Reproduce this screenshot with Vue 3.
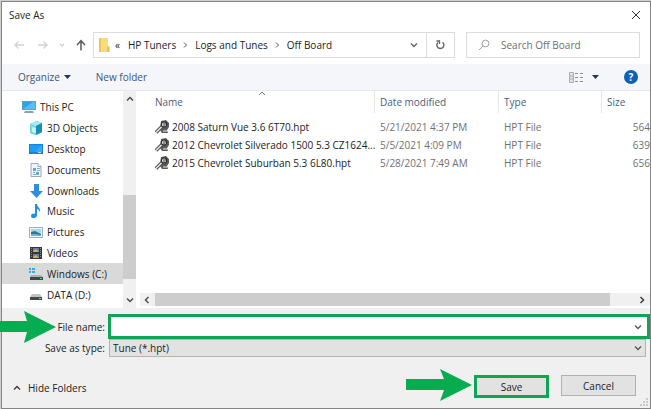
<script setup>
import { ref } from 'vue';

const fileName = ref('');
const fileType = ref('hpt');
const search = ref('');
const selectedPlace = ref('Windows (C:)');

const crumbs = ['HP Tuners', 'Logs and Tunes', 'Off Board'];

const places = [
  { name: 'This PC', icon: 'pc' },
  { name: '3D Objects', icon: 'cube' },
  { name: 'Desktop', icon: 'desktop' },
  { name: 'Documents', icon: 'document' },
  { name: 'Downloads', icon: 'download' },
  { name: 'Music', icon: 'music' },
  { name: 'Pictures', icon: 'picture' },
  { name: 'Videos', icon: 'video' },
  { name: 'Windows (C:)', icon: 'windows' },
  { name: 'DATA (D:)', icon: 'drive' }
];

const files = [
  { name: '2008 Saturn Vue 3.6 6T70.hpt', date: '5/21/2021 4:37 PM', type: 'HPT File', size: '564' },
  { name: '2012 Chevrolet Silverado 1500 5.3 CZ1624...', date: '5/5/2021 4:09 PM', type: 'HPT File', size: '639' },
  { name: '2015 Chevrolet Suburban 5.3 6L80.hpt', date: '5/28/2021 7:49 AM', type: 'HPT File', size: '656' }
];
</script>

<template>
  <div class="screen">
    <div class="dialog" role="dialog" aria-label="Save As">
      <header class="title-bar">
        <span>Save As</span>
        <button type="button" class="close" aria-label="Close">
          <svg width="10" height="10" viewBox="0 0 10 10"><path d="M1 1l8 8M9 1L1 9" stroke="#333" fill="none" /></svg>
        </button>
      </header>

      <div class="nav-bar">
        <div class="nav-buttons">
          <button type="button" aria-label="Back">
            <svg width="12" height="12" viewBox="0 0 12 12"><path d="M11 6H2M5.500 2.500L2 6l3.500 3.500" stroke="#d2d2d2" stroke-width="1.300" fill="none" /></svg>
          </button>
          <button type="button" aria-label="Forward">
            <svg width="12" height="12" viewBox="0 0 12 12"><path d="M1 6h9M6.500 2.500L10 6L6.500 9.500" stroke="#d2d2d2" stroke-width="1.300" fill="none" /></svg>
          </button>
          <button type="button" class="recent" aria-label="Recent locations">
            <svg width="6" height="6" viewBox="0 0 6 6"><path d="M1 2l2 2l2-2" stroke="#d0d0d0" stroke-width="1.300" fill="none" /></svg>
          </button>
          <button type="button" aria-label="Up">
            <svg width="12" height="12" viewBox="0 0 12 12"><path d="M6 11.500V2M2 6l4-4.300L10 6" stroke="#5c5c5c" stroke-width="1.500" fill="none" /></svg>
          </button>
        </div>

        <div class="address">
          <svg class="folder" width="12" height="14" viewBox="0 0 12 14">
            <path d="M1 0h9v8l1.500 1v5H1z" fill="#f8dc79" />
            <path d="M1 0h2v14H1z" fill="#edc45a" />
            <path d="M9 9l1.500-1l1 1v5H9z" fill="#eac356" />
          </svg>
          <span class="more">«</span>
          <template v-for="(crumb, i) in crumbs" :key="crumb">
            <svg v-if="i" class="crumb-arrow" width="5" height="8" viewBox="0 0 5 8"><path d="M1 1.500L3.500 4L1 6.500" stroke="#555" fill="none" /></svg>
            <a href="#" class="crumb">{{ crumb }}</a>
          </template>
          <button type="button" class="address-drop" aria-label="Previous locations">
            <svg width="8" height="8" viewBox="0 0 8 8"><path d="M1 2.500l3 3l3-3" stroke="#666" stroke-width="1.500" fill="none" /></svg>
          </button>
          <button type="button" class="refresh" aria-label="Refresh">
            <svg width="11" height="12" viewBox="0 0 11 12">
              <path d="M7.500 3.200A3.500 3.500 0 1 1 3 3.400" stroke="#666" stroke-width="1.400" fill="none" />
              <path d="M1.500 2h3v3" stroke="#666" stroke-width="1.300" fill="none" />
            </svg>
          </button>
        </div>

        <label class="search">
          <svg width="12" height="12" viewBox="0 0 12 12"><circle cx="7.500" cy="4.500" r="3.400" stroke="#a0a0a0" fill="none" /><path d="M5 7L1 11" stroke="#a0a0a0" fill="none" /></svg>
          <input v-model="search" type="text" placeholder="Search Off Board" aria-label="Search Off Board" />
        </label>
      </div>

      <div class="toolbar">
        <button type="button" class="organize">
          Organize
          <svg width="7" height="4" viewBox="0 0 7 4"><path d="M0 0h7L3.500 4z" fill="#1e395b" /></svg>
        </button>
        <button type="button">New folder</button>
        <button type="button" class="view" aria-label="Change your view">
          <svg width="15" height="11" viewBox="0 0 15 11">
            <path d="M.5.500h4v10h-4zM.5 4h4M.5 7h4" stroke="#a9adb3" fill="#dfe2e6" />
            <path d="M6 1.500h3M11 1.500h3M6 5.500h3M11 5.500h3M6 9.500h3M11 9.500h3" stroke="#8a8f96" />
          </svg>
          <svg width="7" height="4" viewBox="0 0 7 4"><path d="M0 0h7L3.500 4z" fill="#1e395b" /></svg>
        </button>
        <button type="button" class="help" aria-label="Help">?</button>
      </div>

      <main class="content">
        <ul class="places">
          <li
            v-for="place in places"
            :key="place.name"
            :class="{ root: place.icon === 'pc', selected: place.name === selectedPlace }"
            @click="selectedPlace = place.name"
          >
            <svg width="14" height="14" viewBox="0 0 14 14">
              <g v-if="place.icon === 'pc'">
                <path d="M0 1h14v9H0z" fill="#5f9fc9" />
                <path d="M1 2h12v7H1z" fill="#27a5f3" />
                <path d="M1 9L11 2h2v7z" fill="#58bdf8" />
                <path d="M3 11h8l1 2H2z" fill="#8aa3b4" />
              </g>
              <g v-else-if="place.icon === 'cube'">
                <path d="M1 3l7-3l5 2v9l-6 3l-6-2z" fill="#2ab5cf" />
                <path d="M1 3l6 2v9l-6-2z" fill="#74dbe6" />
                <path d="M1 3l7-3l5 2l-6 3z" fill="#a7eef2" />
                <path d="M7 5l6-3v9l-6 3z" fill="#168fb2" />
                <path d="M3 6l4 1v5l-4-1z" fill="#c6f4f5" />
              </g>
              <g v-else-if="place.icon === 'desktop'">
                <path d="M0 2h14v10H0z" fill="#1584d8" />
                <path d="M1 3h12v7H1z" fill="#1e9bf4" />
                <path d="M6 10L13 3v7z" fill="#37a9fa" />
                <path d="M9 10h3v1H9z" fill="#bfe2fa" />
              </g>
              <g v-else-if="place.icon === 'document'">
                <path d="M2 .5h7l3 3v10H2z" fill="#eef4f8" stroke="#9aabb8" />
                <path d="M9 .5v3h3" fill="#fff" stroke="#9aabb8" />
                <path d="M4 5h3v3H4zM7 9h3v2H7z" fill="#61a5d2" />
                <path d="M8 5.500h3M8 7.500h3M4 9.500h2M4 11.500h6" stroke="#7aafd0" />
              </g>
              <g v-else-if="place.icon === 'download'">
                <path d="M5 0h5v7h4l-6.500 7L1 7h4z" fill="#2f8de0" />
              </g>
              <g v-else-if="place.icon === 'music'">
                <path d="M6 0h2c0 3 4 4 3 8c-1-2-2-3-3-3v6c0 4-6 4-6 1c0-2 2-3 4-2z" fill="#1e90e5" />
              </g>
              <g v-else-if="place.icon === 'picture'">
                <path d="M.5 2.500h13v10H.5z" fill="#f2f5f7" stroke="#a3adb4" />
                <path d="M2 4h10v7H2z" fill="#a7d5ef" />
                <path d="M2 7l4-1l6 3v2H2z" fill="#3c718b" />
                <path d="M2 9l5 0l5 1v1H2z" fill="#6ab3da" />
              </g>
              <g v-else-if="place.icon === 'video'">
                <path d="M1 1h12v12H1z" fill="#34363c" />
                <path d="M4 2h6v4H4z" fill="#5f7fa8" />
                <path d="M4 8h6v4H4z" fill="#657fb5" />
                <path d="M4 5l3-2l3 3H4zM4 11l3-2l3 3H4z" fill="#c9b45c" />
                <path d="M2.500 2v10M11.500 2v10" stroke="#85888e" stroke-dasharray="1 1" />
              </g>
              <g v-else-if="place.icon === 'windows'">
                <path d="M0 1h2v2H0zM3 1h3v2H3zM0 4h2v2H0zM3 4h3v2H3z" fill="#23b4ea" />
                <path d="M2 8h10l2 2H1z" fill="#a9b1b5" />
                <path d="M1 10h13v3H1z" fill="#3e4649" />
                <path d="M11 11h2v1h-2z" fill="#4ee08a" />
              </g>
              <g v-else>
                <path d="M3 6h8l2 3H1z" fill="#c0c3c5" />
                <path d="M1 9h12v3H1z" fill="#44494b" />
                <path d="M10 10h2v1h-2z" fill="#69d690" />
              </g>
            </svg>
            <span>{{ place.name }}</span>
          </li>
        </ul>

        <div class="v-scroll">
          <svg width="8" height="8" viewBox="0 0 8 8"><path d="M1 5.500l3-3l3 3" stroke="#505050" stroke-width="1.500" fill="none" /></svg>
          <div class="v-thumb"></div>
          <svg width="8" height="8" viewBox="0 0 8 8"><path d="M1 2.500l3 3l3-3" stroke="#505050" stroke-width="1.500" fill="none" /></svg>
        </div>

        <div class="files">
          <table>
            <colgroup>
              <col class="col-name" />
              <col class="col-date" />
              <col class="col-type" />
              <col class="col-size" />
            </colgroup>
            <thead>
              <tr>
                <th>
                  Name
                  <svg class="sort" width="8" height="5" viewBox="0 0 8 5"><path d="M1 4l3-3l3 3" stroke="#777" fill="none" /></svg>
                </th>
                <th>Date modified</th>
                <th>Type</th>
                <th>Size</th>
              </tr>
            </thead>
            <tbody>
              <tr v-for="file in files" :key="file.name">
                <td>
                  <div class="file-name">
                    <svg width="14" height="14" viewBox="0 0 14 14">
                      <path d="M6 1l5-1l3 3v4l-2 3l1 3H7l-2-3z" fill="#5a5a5a" />
                      <circle cx="9" cy="4.500" r="2.700" fill="#ddd" stroke="#2d2d2d" stroke-width="1.200" />
                      <path d="M8 4h3M8 6h2" stroke="#444" />
                      <path d="M7 6.500L1 12.500" stroke="#4d4d4d" stroke-width="3.500" />
                      <path d="M6.500 7L1 12.500" stroke="#ececec" stroke-width="1.400" />
                      <path d="M8 11h4" stroke="#bbb" stroke-width="1.500" />
                    </svg>
                    <span>{{ file.name }}</span>
                  </div>
                </td>
                <td>{{ file.date }}</td>
                <td>{{ file.type }}</td>
                <td class="size">{{ file.size }}</td>
              </tr>
            </tbody>
          </table>
          <div class="h-scroll">
            <svg width="8" height="8" viewBox="0 0 8 8"><path d="M5.500 1l-3 3l3 3" stroke="#505050" stroke-width="1.500" fill="none" /></svg>
            <div class="h-thumb"></div>
            <svg width="8" height="8" viewBox="0 0 8 8"><path d="M2.500 1l3 3l-3 3" stroke="#404040" stroke-width="1.500" fill="none" /></svg>
          </div>
        </div>
      </main>

      <form class="form" @submit.prevent>
        <div class="field name-field">
          <svg class="arrow arrow-name" width="56" height="32" viewBox="0 0 56 32"><path d="M0 10h27l-3-10l32 16l-32 16l3-11H0z" fill="#05ac50" /></svg>
          <label for="file-name">File name:</label>
          <div class="combo">
            <input id="file-name" v-model="fileName" type="text" />
            <svg width="8" height="8" viewBox="0 0 8 8"><path d="M1 2.500l3 3l3-3" stroke="#555" stroke-width="1.300" fill="none" /></svg>
          </div>
        </div>
        <div class="field">
          <label for="file-type">Save as type:</label>
          <div class="type-box">
            <select id="file-type" v-model="fileType">
              <option value="hpt">Tune (*.hpt)</option>
            </select>
            <svg width="8" height="8" viewBox="0 0 8 8"><path d="M1 2.500l3 3l3-3" stroke="#555" stroke-width="1.300" fill="none" /></svg>
          </div>
        </div>

        <div class="actions">
          <button type="button" class="hide-folders">
            <svg width="8" height="8" viewBox="0 0 8 8"><path d="M1 5.500l3-3l3 3" stroke="#444" stroke-width="1.500" fill="none" /></svg>
            Hide Folders
          </button>
          <div class="save-group">
            <svg class="arrow arrow-save" width="66" height="32" viewBox="0 0 66 32"><path d="M0 10h38l-4-10l32 16l-32 16l4-11H0z" fill="#05ac50" /></svg>
            <button type="submit" class="btn btn-save">Save</button>
          </div>
          <button type="button" class="btn">Cancel</button>
        </div>
        <svg class="grip" width="8" height="8" viewBox="0 0 8 8"><path d="M6 0h2v2H6zM3 3h2v2H3zM6 3h2v2H6zM0 6h2v2H0zM3 6h2v2H3zM6 6h2v2H6z" fill="#c8c8c8" /></svg>
      </form>
    </div>
  </div>
</template>

<style>
body {
  margin: 0;
  background: #cfcfcf;
}
</style>

<style scoped>
.screen {
  box-sizing: border-box;
  min-height: 100vh;
  padding: 1px 0 0 1px;
  display: flex;
  font-family: "Open Sans", "Noto Sans", sans-serif;
  font-size: 10px;
  line-height: 14px;
  color: #222;
}

.dialog {
  flex: 1;
  min-width: 0;
  display: flex;
  flex-direction: column;
  border: 1px solid #858585;
  background: #fff;
}

button,
input,
select {
  font: inherit;
  color: inherit;
  margin: 0;
  padding: 0;
  border: 0;
  border-radius: 0;
  background: none;
  outline: none;
}

svg {
  display: block;
  flex: none;
}

.title-bar {
  display: flex;
  align-items: center;
  justify-content: space-between;
  height: 26px;
  padding: 0 9px 0 7px;
}

.nav-bar {
  display: flex;
  align-items: center;
  height: 26px;
  padding: 4px 10px 6px 11px;
}

.nav-buttons {
  display: flex;
  align-items: center;
  width: 80px;
  gap: 12px;
}

.nav-buttons .recent {
  margin: 0 -2px;
}

.address {
  box-sizing: border-box;
  flex: 1;
  display: flex;
  align-items: center;
  height: 26px;
  padding-left: 4px;
  border: 1px solid #dcdcdc;
}

.more {
  margin: 0 8px 0 5px;
}

.crumb {
  color: #222;
  text-decoration: none;
}

.crumb-arrow {
  margin: 0 7px;
}

.address-drop {
  display: flex;
  margin-left: auto;
  padding: 8px;
}

.refresh {
  display: flex;
  align-items: center;
  justify-content: center;
  width: 28px;
  height: 24px;
  border-left: 1px solid #dcdcdc;
}

.search {
  box-sizing: border-box;
  display: flex;
  align-items: center;
  gap: 11px;
  width: 174px;
  height: 26px;
  margin-left: 11px;
  padding-left: 11px;
  border: 1px solid #dcdcdc;
}

.search input {
  flex: 1;
  min-width: 0;
}

.search input::placeholder {
  color: #6d6d6d;
  opacity: 1;
}

.toolbar {
  display: flex;
  align-items: center;
  height: 26px;
  padding: 0 12px 0 16px;
  background: #f4f6f9;
  border-bottom: 1px solid #e6e8ea;
  color: #40557a;
}

.organize {
  display: flex;
  align-items: center;
  gap: 4px;
  margin-right: 25px;
}

.view {
  display: flex;
  align-items: center;
  gap: 8px;
  margin-left: auto;
}

.help {
  width: 14px;
  height: 14px;
  margin-left: 25px;
  border-radius: 50%;
  background: #0d60b5;
  color: #fff;
  font-weight: 700;
  text-align: center;
}

.content {
  display: flex;
  height: 217px;
}

.places {
  box-sizing: border-box;
  display: grid;
  grid-template-rows: repeat(10, 1fr);
  width: 121px;
  margin: 0;
  padding: 6px 0 3px;
  list-style: none;
}

.places li {
  display: flex;
  align-items: center;
  gap: 4px;
  padding-left: 27px;
}

.places .root {
  padding-left: 20px;
}

.places .selected {
  background: #d9d9d9;
}

.v-scroll {
  display: flex;
  flex-direction: column;
  align-items: center;
  box-sizing: border-box;
  width: 13px;
  padding: 4px 0;
  background: #f0f0f0;
}

.v-thumb {
  width: 13px;
  height: 84px;
  margin: 92px 0 auto;
  background: #cdcdcd;
}

.files {
  flex: 1;
  min-width: 0;
  display: flex;
  flex-direction: column;
  justify-content: space-between;
  padding-left: 4px;
  overflow: hidden;
}

table {
  width: 100%;
  table-layout: fixed;
  border-collapse: separate;
  border-spacing: 0;
}

.col-date {
  width: 124px;
}

.col-type {
  width: 103px;
}

.col-size {
  width: 48px;
}

th {
  position: relative;
  height: 22px;
  padding: 0 0 0 5px;
  border-right: 1px solid #e6e6e6;
  color: #4c607a;
  font-weight: 400;
  text-align: left;
}

th:first-child {
  padding-left: 15px;
}

th:last-child {
  border-right: 0;
}

.sort {
  position: absolute;
  top: 0;
  left: 118px;
}

tbody::before {
  content: "";
  display: block;
  height: 5px;
}

td {
  height: 18px;
  padding: 0 0 0 5px;
  color: #707070;
  white-space: nowrap;
}

td:first-child {
  padding-left: 15px;
  color: #222;
}

td.size {
  padding: 0;
  text-align: right;
}

.file-name {
  display: flex;
  align-items: center;
  gap: 3px;
}

.h-scroll {
  display: flex;
  align-items: center;
  gap: 4px;
  height: 13px;
  margin-bottom: 2px;
  padding: 0 4px 0 3px;
  background: #f0f0f0;
}

.h-thumb {
  flex: 1;
  height: 13px;
  margin-right: 24px;
  background: #cdcdcd;
}

.form {
  position: relative;
  flex: 1;
  padding-top: 6px;
  background: #f0f0f0;
}

.field {
  position: relative;
  display: flex;
  align-items: center;
}

.field label {
  width: 103px;
  margin-right: 4px;
  text-align: right;
}

.combo {
  box-sizing: border-box;
  flex: 1;
  display: flex;
  align-items: center;
  height: 25px;
  margin-left: -1px;
  padding-right: 5px;
  border: 3px solid #12a456;
  background: #fff;
}

.combo input {
  flex: 1;
  min-width: 0;
  padding: 0 4px;
}

.type-box {
  position: relative;
  flex: 1;
  margin-right: 4px;
}

.type-box select {
  display: block;
  box-sizing: border-box;
  width: 100%;
  height: 18px;
  padding: 0 3px;
  appearance: none;
  background: #e2e2e2;
  border: 1px solid #b5b5b5;
}

.type-box svg {
  position: absolute;
  top: 5px;
  right: 4px;
}

.actions {
  display: flex;
  align-items: flex-start;
  gap: 12px;
  margin-top: 18px;
  padding: 0 14px 7px 11px;
}

.hide-folders {
  display: flex;
  align-items: center;
  gap: 7px;
  height: 26px;
  margin-right: auto;
}

.save-group {
  position: relative;
}

.btn {
  box-sizing: border-box;
  display: block;
  width: 75px;
  height: 21px;
  background: #e2e2e2;
  border: 1px solid #b0b0b0;
}

.btn-save {
  height: 23px;
  border: 3px solid #12a456;
}

.arrow {
  position: absolute;
  pointer-events: none;
}

.arrow-name {
  top: -3px;
  left: -2px;
}

.arrow-save {
  top: -6px;
  right: 77px;
}

.grip {
  position: absolute;
  right: 2px;
  bottom: 2px;
}
</style>
